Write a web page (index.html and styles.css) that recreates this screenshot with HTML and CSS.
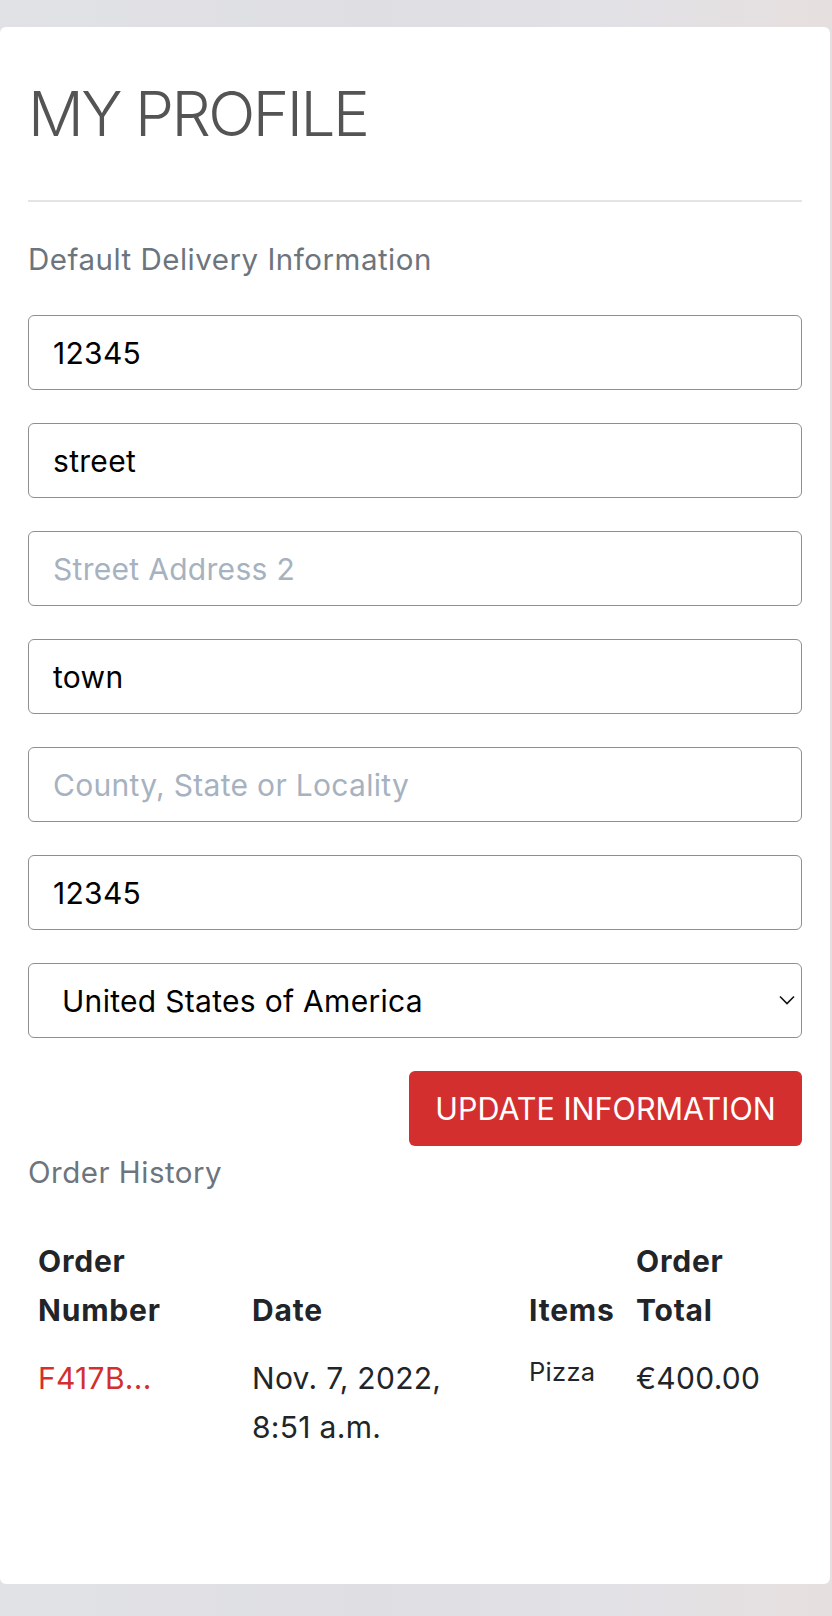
FILE: index.html
```html
<!DOCTYPE html>
<html lang="en">
<head>
<meta charset="utf-8">
<title>My Profile</title>
<link rel="stylesheet" href="styles.css">
</head>
<body>
<main class="card">
  <h1 class="title">MY PROFILE</h1>
  <hr class="divider">
  <p class="section-label">Default Delivery Information</p>
  <form class="form">
    <input class="field" type="text" value="12345">
    <input class="field" type="text" value="street">
    <input class="field" type="text" placeholder="Street Address 2">
    <input class="field" type="text" value="town">
    <input class="field" type="text" placeholder="County, State or Locality">
    <input class="field" type="text" value="12345">
    <div class="select-wrap">
      <select class="field select">
        <option>United States of America</option>
      </select>
      <svg class="chevron" width="16" height="10" viewBox="0 0 16 10"><path d="M1 1.5 L8 8.5 L15 1.5" fill="none" stroke="#111" stroke-width="1.6"/></svg>
    </div>
    <div class="actions">
      <button class="btn" type="button">UPDATE INFORMATION</button>
    </div>
  </form>
  <p class="section-label history-label">Order History</p>
  <table class="orders">
    <colgroup>
      <col class="c1"><col class="c2"><col class="c3"><col class="c4">
    </colgroup>
    <thead>
      <tr>
        <th>Order Number</th>
        <th>Date</th>
        <th>Items</th>
        <th>Order Total</th>
      </tr>
    </thead>
    <tbody>
      <tr>
        <td><a class="order-link" href="#">F417B...</a></td>
        <td>Nov. 7, 2022, 8:51 a.m.</td>
        <td><span class="item">Pizza</span></td>
        <td>€400.00</td>
      </tr>
    </tbody>
  </table>
</main>
</body>
</html>
```

FILE: styles.css
```css
* { box-sizing: border-box; }

html, body {
  margin: 0;
  padding: 0;
}

body {
  width: 832px;
  height: 1616px;
  overflow: hidden;
  background: linear-gradient(90deg, #e1e2e5 0%, #dfdfe3 45%, #e2e1e5 75%, #e6dfdf 100%);
  font-family: Inter, "Noto Sans", sans-serif;
  padding-top: 27px;
}

.card {
  width: 830px;
  min-height: 1557px;
  background: #ffffff;
  border-radius: 6px;
  padding: 49px 28px 40px 28px;
}

.title {
  margin: 0;
  font-weight: 300;
  font-size: 62px;
  line-height: 76px;
  color: #545454;
  letter-spacing: -2.5px;
}

.divider {
  margin: 48px 0 0 0;
  border: 0;
  border-top: 2px solid #e4e4e4;
  height: 0;
}

.section-label {
  margin: 35px 0 0 0;
  font-size: 29.5px;
  line-height: 45px;
  letter-spacing: 0.5px;
  color: #6c757d;
}

.form {
  margin-top: 33px;
  display: flex;
  flex-direction: column;
  gap: 33px;
}

.field {
  display: block;
  width: 100%;
  height: 75px;
  border: 1.5px solid #8f8f8f;
  border-radius: 6px;
  padding: 0 24px;
  font-family: Inter, "Noto Sans", sans-serif;
  font-size: 30px;
  letter-spacing: 0.3px;
  color: #000;
  background: #fff;
  outline: none;
}

.field::placeholder {
  color: #a6b2c0;
  opacity: 1;
}

.select-wrap {
  position: relative;
}

.select {
  appearance: none;
  -webkit-appearance: none;
  padding-left: 33px;
}

.chevron {
  position: absolute;
  right: 7px;
  top: 32px;
}

.actions {
  display: flex;
  justify-content: flex-end;
}

.btn {
  width: 393px;
  height: 75px;
  border: 0;
  border-radius: 6px;
  background: #d32f2f;
  color: #fff;
  font-family: Inter, "Noto Sans", sans-serif;
  font-size: 30.5px;
  font-weight: 400;
  padding: 0;
}

.history-label {
  margin-top: 4px;
}

.orders {
  margin-top: 32px;
  width: 774px;
  border-collapse: collapse;
  table-layout: fixed;
  color: #212529;
}

.c1 { width: 214px; }
.c2 { width: 277px; }
.c3 { width: 107px; }
.c4 { width: 176px; }

.orders th {
  text-align: left;
  vertical-align: bottom;
  font-size: 30px;
  font-weight: 700;
  letter-spacing: 0.8px;
  line-height: 48.5px;
  padding: 10px 4px 10px 10px;
}

.orders td {
  text-align: left;
  vertical-align: top;
  font-size: 30px;
  letter-spacing: 0.3px;
  line-height: 48.5px;
  padding: 10px 12px 10px 10px;
}

.order-link {
  color: #d32f2f;
  text-decoration: none;
}

.item {
  display: block;
  font-size: 25.5px;
  letter-spacing: 0.3px;
  line-height: 36px;
}
```
